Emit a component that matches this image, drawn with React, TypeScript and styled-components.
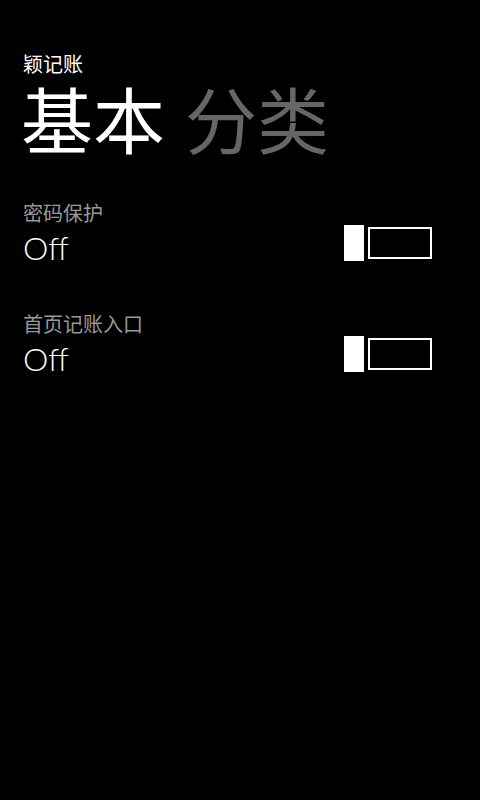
import React from "react";
import styled, { createGlobalStyle } from "styled-components";

const Global = createGlobalStyle`
  html, body { margin: 0; padding: 0; background: #000; }
  body { width: 480px; height: 800px; overflow: hidden; }
  #root { min-height: 800px; background: #000; }
`;

const cjk = `"Noto Sans CJK SC", "Noto Sans", sans-serif`;
const latinLight = `Lato, "Open Sans", sans-serif`;

const Page = styled.div`
  box-sizing: border-box;
  width: 480px;
  height: 800px;
  background: #000;
  padding: 51px 48px 0 23px;
  display: flex;
  flex-direction: column;
`;

const AppTitle = styled.div`
  font-family: ${cjk};
  font-size: 20px;
  line-height: 26px;
  color: #fff;
`;

const PivotHeaders = styled.div`
  display: flex;
  gap: 20px;
  margin-left: -2px;
`;

const PivotItem = styled.div<{ $active?: boolean }>`
  font-family: ${cjk};
  font-size: 72px;
  line-height: 80px;
  color: ${(p) => (p.$active ? "#fff" : "#666")};
`;

const Settings = styled.div`
  display: flex;
  flex-direction: column;
  gap: 44px;
  margin-top: 44px;
`;

const Row = styled.div`
  display: flex;
  justify-content: space-between;
  align-items: flex-start;
`;

const TextCol = styled.div`
  display: flex;
  flex-direction: column;
  gap: 3px;
`;

const Label = styled.div`
  font-family: ${cjk};
  font-size: 20px;
  line-height: 24px;
  color: #999;
`;

const Value = styled.div`
  font-family: ${latinLight};
  font-weight: 300;
  font-size: 32px;
  line-height: 40px;
  color: #fff;
`;

const Toggle = styled.div`
  display: flex;
  align-items: center;
  gap: 4px;
  margin-top: 24px;
  height: 36px;
`;

const Thumb = styled.div`
  width: 20px;
  height: 36px;
  background: #fff;
`;

const Track = styled.div`
  box-sizing: border-box;
  width: 64px;
  height: 32px;
  border: 2px solid #fff;
`;

const items = [
  { label: "密码保护", value: "Off" },
  { label: "首页记账入口", value: "Off" },
];

export default function App() {
  return (
    <>
      <Global />
      <Page>
        <AppTitle>颖记账</AppTitle>
        <PivotHeaders>
          <PivotItem $active>基本</PivotItem>
          <PivotItem>分类</PivotItem>
        </PivotHeaders>
        <Settings>
          {items.map((it) => (
            <Row key={it.label}>
              <TextCol>
                <Label>{it.label}</Label>
                <Value>{it.value}</Value>
              </TextCol>
              <Toggle>
                <Thumb />
                <Track />
              </Toggle>
            </Row>
          ))}
        </Settings>
      </Page>
    </>
  );
}
